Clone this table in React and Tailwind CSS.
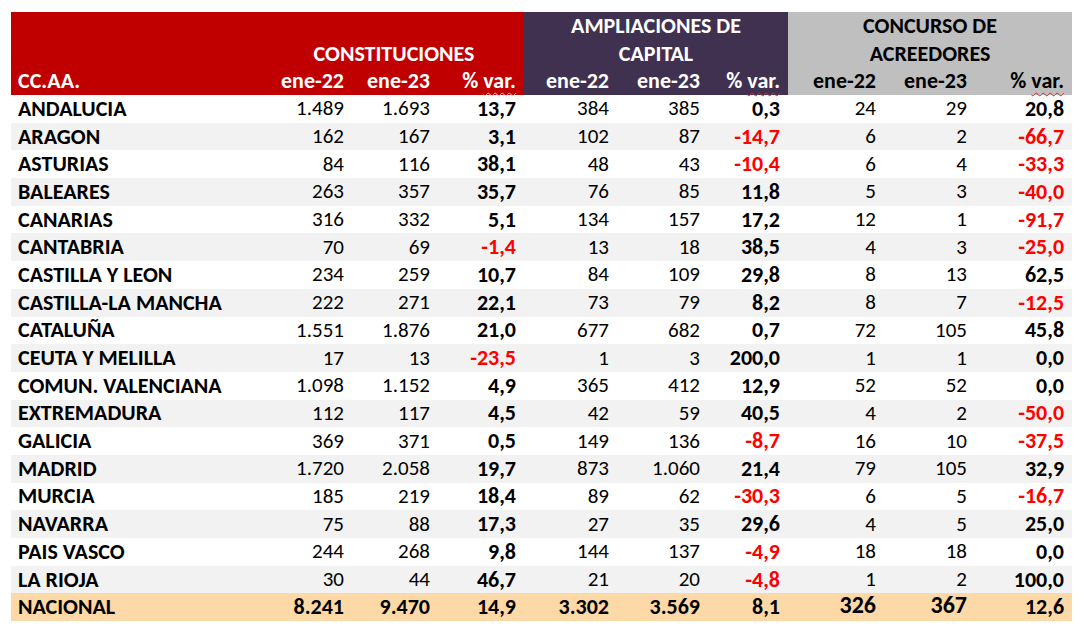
import React from "react";

const rows = [
  ["ANDALUCIA", "1.489", "1.693", "13,7", "384", "385", "0,3", "24", "29", "20,8"],
  ["ARAGON", "162", "167", "3,1", "102", "87", "-14,7", "6", "2", "-66,7"],
  ["ASTURIAS", "84", "116", "38,1", "48", "43", "-10,4", "6", "4", "-33,3"],
  ["BALEARES", "263", "357", "35,7", "76", "85", "11,8", "5", "3", "-40,0"],
  ["CANARIAS", "316", "332", "5,1", "134", "157", "17,2", "12", "1", "-91,7"],
  ["CANTABRIA", "70", "69", "-1,4", "13", "18", "38,5", "4", "3", "-25,0"],
  ["CASTILLA Y LEON", "234", "259", "10,7", "84", "109", "29,8", "8", "13", "62,5"],
  ["CASTILLA-LA MANCHA", "222", "271", "22,1", "73", "79", "8,2", "8", "7", "-12,5"],
  ["CATALUÑA", "1.551", "1.876", "21,0", "677", "682", "0,7", "72", "105", "45,8"],
  ["CEUTA Y MELILLA", "17", "13", "-23,5", "1", "3", "200,0", "1", "1", "0,0"],
  ["COMUN. VALENCIANA", "1.098", "1.152", "4,9", "365", "412", "12,9", "52", "52", "0,0"],
  ["EXTREMADURA", "112", "117", "4,5", "42", "59", "40,5", "4", "2", "-50,0"],
  ["GALICIA", "369", "371", "0,5", "149", "136", "-8,7", "16", "10", "-37,5"],
  ["MADRID", "1.720", "2.058", "19,7", "873", "1.060", "21,4", "79", "105", "32,9"],
  ["MURCIA", "185", "219", "18,4", "89", "62", "-30,3", "6", "5", "-16,7"],
  ["NAVARRA", "75", "88", "17,3", "27", "35", "29,6", "4", "5", "25,0"],
  ["PAIS VASCO", "244", "268", "9,8", "144", "137", "-4,9", "18", "18", "0,0"],
  ["LA RIOJA", "30", "44", "46,7", "21", "20", "-4,8", "1", "2", "100,0"],
];

const VarLabel = ({ wave }) => (
  <>
    %{" "}
    <span className={`underline decoration-wavy decoration-1 underline-offset-4 ${wave}`}>var.</span>
  </>
);

export default function App() {
  return (
    <div
      className="bg-white w-[1087px] h-[643px] pt-[12px] pl-[11px]"
      style={{ fontFamily: "Carlito, Lato, 'Open Sans', sans-serif" }}
    >
      <table className="table-fixed border-collapse w-[1061px] text-[22px] leading-none">
        <colgroup>
          <col className="w-[253px]" />
          <col className="w-[88px]" />
          <col className="w-[86px]" />
          <col className="w-[86px]" />
          <col className="w-[93px]" />
          <col className="w-[91px]" />
          <col className="w-[80px]" />
          <col className="w-[96px]" />
          <col className="w-[91px]" />
          <col className="w-[97px]" />
        </colgroup>
        <thead className="font-bold">
          <tr className="h-[28px]">
            <td className="bg-[#c00000]" />
            <td colSpan={3} className="bg-[#c00000]" />
            <td colSpan={3} className="bg-[#403151] text-white text-center align-middle">
              AMPLIACIONES DE
            </td>
            <td colSpan={3} className="bg-[#bfbfbf] text-black text-center align-middle">
              CONCURSO DE
            </td>
          </tr>
          <tr className="h-[27px]">
            <td className="bg-[#c00000]" />
            <td colSpan={3} className="bg-[#c00000] text-white text-center">
              CONSTITUCIONES
            </td>
            <td colSpan={3} className="bg-[#403151] text-white text-center">
              CAPITAL
            </td>
            <td colSpan={3} className="bg-[#bfbfbf] text-black text-center">
              ACREEDORES
            </td>
          </tr>
          <tr className="h-[28px]">
            <td className="bg-[#c00000] text-white text-left pl-[7px]">CC.AA.</td>
            <td className="bg-[#c00000] text-white text-right pr-[8px]">ene-22</td>
            <td className="bg-[#c00000] text-white text-right pr-[8px]">ene-23</td>
            <td className="bg-[#c00000] text-white text-right pr-[8px]">
              <VarLabel wave="decoration-[#f4c7c7]" />
            </td>
            <td className="bg-[#403151] text-white text-right pr-[8px]">ene-22</td>
            <td className="bg-[#403151] text-white text-right pr-[8px]">ene-23</td>
            <td className="bg-[#403151] text-white text-right pr-[8px]">
              <VarLabel wave="decoration-[#e02020]" />
            </td>
            <td className="bg-[#bfbfbf] text-black text-right pr-[8px]">ene-22</td>
            <td className="bg-[#bfbfbf] text-black text-right pr-[8px]">ene-23</td>
            <td className="bg-[#bfbfbf] text-black text-right pr-[8px]">
              <VarLabel wave="decoration-[#e02020]" />
            </td>
          </tr>
        </thead>
        <tbody>
          {rows.map((r, i) => (
            <tr key={r[0]} className={`h-[27.7px] ${i % 2 ? "bg-[#f2f2f2]" : "bg-white"}`}>
              <td className="font-bold text-left pl-[7px] text-black">{r[0]}</td>
              {r.slice(1).map((v, j) => {
                const isVar = j % 3 === 2;
                const neg = v.startsWith("-");
                return (
                  <td
                    key={j}
                    className={`text-right pr-[8px] ${isVar ? "font-bold" : "text-[21px]"} ${
                      isVar && neg ? "text-[#ff0000]" : "text-black"
                    }`}
                  >
                    {v}
                  </td>
                );
              })}
            </tr>
          ))}
          <tr className="h-[28px] bg-[#fcd9a6] font-bold text-black">
            <td className="text-left pl-[7px]">NACIONAL</td>
            <td className="text-right pr-[8px]">8.241</td>
            <td className="text-right pr-[8px]">9.470</td>
            <td className="text-right pr-[8px]">14,9</td>
            <td className="text-right pr-[8px]">3.302</td>
            <td className="text-right pr-[8px]">3.569</td>
            <td className="text-right pr-[8px]">8,1</td>
            <td className="text-right pr-[8px] text-[24px] align-top">326</td>
            <td className="text-right pr-[8px] text-[24px] align-top">367</td>
            <td className="text-right pr-[8px]">12,6</td>
          </tr>
        </tbody>
      </table>
    </div>
  );
}
